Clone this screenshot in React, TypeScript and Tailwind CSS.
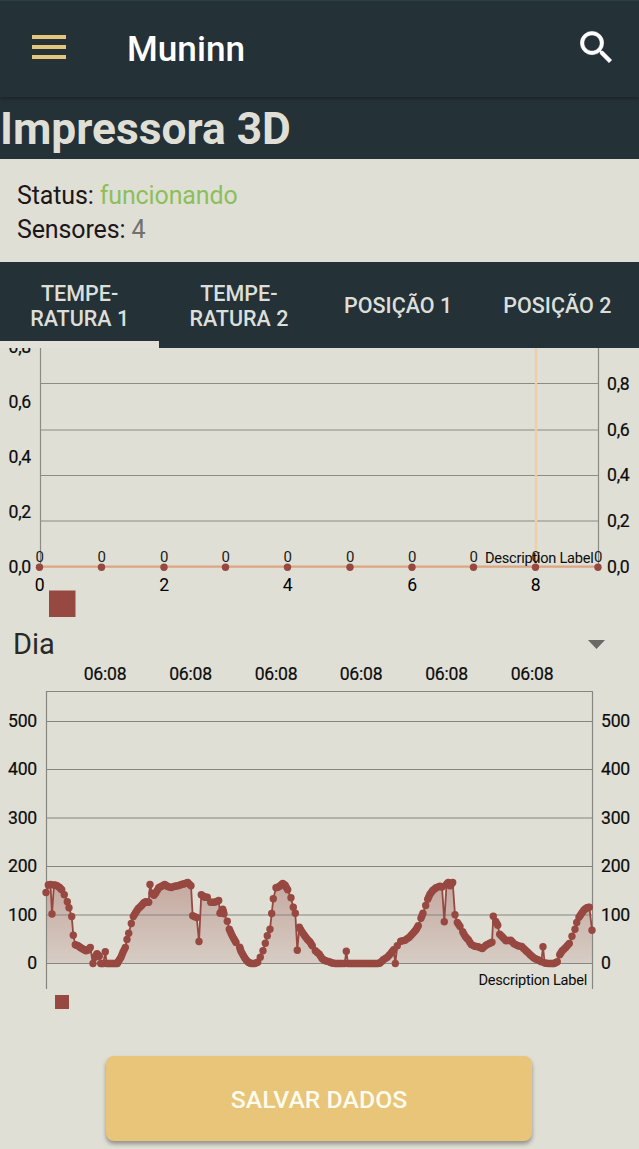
// Sensor detail page - status, tabs and the two temperature charts

import { useState } from "react"

const TABS = ["TEMPE-\nRATURA 1", "TEMPE-\nRATURA 2", "POSIÇÃO 1", "POSIÇÃO 2"]

// [x offset, height] of each reading inside the daily plot
const READINGS = [
  [0, 71], [2.3, 78.5], [4.5, 79], [6, 49.5], [8, 78.5], [10.5, 78], [13.3, 76.3], [15.7, 73.7],
  [18.3, 68.7], [21.3, 61.7], [23, 55.7], [25.7, 47], [27.3, 28.3], [29.3, 18.7], [32, 17.7],
  [34.7, 15.7], [37.3, 14.3], [40, 12.7], [42.3, 13.7], [44.3, 16], [47, 0], [49, 6.3], [51, 9.7],
  [53.3, 7.3], [54.7, 0], [57.3, 0], [59.3, 11.7], [60.7, 0], [63.3, 0], [66, 0], [68.7, 0],
  [71.3, 0], [73, 3], [75, 6.3], [77, 11.3], [79.3, 16], [81, 24], [82.7, 30.3], [85.3, 40],
  [87.3, 47], [89.7, 51], [92.3, 55], [95.3, 57.7], [98, 60.7], [100, 61.7], [102.7, 61.3],
  [104, 79], [106, 70.3], [108, 68.3], [110, 71], [112.7, 75.7], [115.7, 77.3], [118.7, 79],
  [121.7, 77], [125.3, 76], [128.7, 77.3], [132, 77.7], [135.3, 79], [138.3, 79.7], [141.7, 81],
  [145, 77.7], [146.7, 47.7], [150.7, 46], [153, 22], [155.3, 68.7], [158.7, 66.3], [161.3, 66.3],
  [164.7, 61.3], [168.7, 61.3], [172.7, 63], [174, 50.3], [176.7, 54.3], [178, 49.7],
  [181.3, 42.3], [183.3, 34.3], [185.3, 29.7], [187.7, 25], [190, 21], [193.7, 16.3],
  [195, 12.3], [197.3, 8], [200, 3.7], [202.7, 1], [205.3, 0], [208.7, 0], [211.7, 1.3],
  [214.3, 6.3], [217, 12.7], [219.3, 20.3], [221.3, 27.7], [224, 34.3], [225.7, 50],
  [227.3, 64.7], [230, 75.7], [233.3, 77], [236.7, 80], [239.3, 78], [241.7, 73.7],
  [245, 65.7], [247.3, 56.3], [249.3, 50.3], [251.3, 13.3], [253.3, 36.3], [255.7, 32],
  [258.3, 28.3], [261.3, 24.3], [264, 21.5], [266.3, 17.7], [269.3, 12.7], [273.3, 9.3],
  [276, 5], [279.3, 2.7], [283.3, 1.7], [286, 0.5], [289, 0], [292, 0], [295, 0], [298.7, 0],
  [300.3, 12.3], [302, 0], [305, 0], [308, 0], [311, 0], [314, 0], [317, 0], [320, 0],
  [323, 0], [326, 0], [329, 0], [332, 0], [334, 0.5], [337.3, 3.7], [341.3, 6.3], [345, 10.3],
  [347.7, 13.7], [349.3, 0], [351.3, 17.7], [354.7, 22.3], [359, 23.3], [363.3, 26.3],
  [367, 30.3], [370, 33.7], [372.3, 37.7], [375, 45.3], [377, 50.3], [379.7, 58],
  [381.7, 64.3], [384, 69.3], [386.7, 73], [390, 75.7], [394, 77.3], [396, 76.5],
  [398.3, 41.7], [400.5, 79], [402.3, 81], [404, 77.7], [406.7, 81], [409, 48.7],
  [411.3, 41], [414, 37], [416.7, 31.7], [419.3, 27], [422.3, 23.7], [425.3, 19],
  [428.7, 17.3], [432.3, 16.7], [436.3, 15], [440, 18.3], [443.3, 20], [446, 21.3],
  [447.3, 47.3], [449.7, 42], [451.7, 38.3], [453.7, 29.3], [456.7, 26.3], [460, 22.7],
  [464.7, 23.3], [468, 19.7], [472, 17.7], [475.7, 17], [479, 13.7], [482, 11],
  [485.3, 7.7], [488.7, 5], [492, 3.7], [495.3, 1.7], [497, 16.7], [498.7, 0.5], [502, 0],
  [505.3, 0], [508, 0], [511.3, 1.7], [513.7, 8.7], [516.3, 12.7], [519.7, 16], [523.3, 20],
  [526, 27.3], [529, 34.3], [530.7, 41], [533, 46.3], [535.7, 50.3], [538.3, 53.7],
  [541, 55.7], [543.3, 56.3], [546, 33.3],
]

// readings close to each other get one more dot between them
const DOTS = READINGS.flatMap(([x, h], i) => {
  const next = READINGS[i + 1]
  if (!next || Math.hypot(next[0] - x, next[1] - h) > 5.6) return [[x, h]]
  return [[x, h], [(x + next[0]) / 2, (h + next[1]) / 2]]
})

function LiveChart() {
  const points = [39.5, 101.5, 164, 225.5, 287.5, 350, 412, 473.5, 535.5, 598]

  return (
    <svg width="639" height="272" viewBox="0 0 639 272" className="block shrink-0 font-[Roboto,sans-serif] text-[17.6px] tracking-[-0.25px]">
      <g stroke="#8b8c84" strokeWidth="1.2">
        <path d="M40.5 0V219M598.5 0V219" />
        {[35.5, 82, 127.5, 173].map((y) => (
          <path key={y} d={`M40.5 ${y}H598.5`} />
        ))}
      </g>
      <path d="M536 0V219" stroke="#edcfa8" strokeWidth="2.3" />
      <path d="M40 218.7H598" stroke="#dda581" strokeWidth="2.2" />
      {points.map((x, i) => (
        <g key={x}>
          <circle cx={x} cy="219.3" r="3.7" fill="#974840" />
          <text x={x} y="213.5" textAnchor="middle" fontSize="15" fill="#1c1c19">0</text>
          {i % 2 === 0 && (
            <text x={x} y="242.5" textAnchor="middle">{i}</text>
          )}
        </g>
      ))}
      <g fill="#0c0c0b" stroke="#0c0c0b" strokeWidth="0.2">
        {["0,8", "0,6", "0,4", "0,2", "0,0"].map((label, i) => (
          <g key={label}>
            <text x="31" y={5.2 + i * 55} textAnchor="end">{label}</text>
            <text x="607" y={42 + i * 45.7}>{label}</text>
          </g>
        ))}
      </g>
      <text x="593.5" y="215" textAnchor="end" fontSize="14.6" fill="#0c0c0b">Description Label</text>
      <rect x="49" y="242.5" width="26.5" height="26.5" fill="#974840" />
    </svg>
  )
}

function DailyChart() {
  const line = READINGS.map(([x, h]) => `${46 + x},${303.5 - h}`).join(" ")

  return (
    <svg width="639" height="360" viewBox="0 0 639 360" className="block shrink-0 font-[Roboto,sans-serif] text-[17.6px] tracking-[-0.25px]">
      <defs>
        <linearGradient id="fill" x1="0" y1="222" x2="0" y2="304" gradientUnits="userSpaceOnUse">
          <stop offset="0" stopColor="#974840" stopOpacity="0.36" />
          <stop offset="1" stopColor="#974840" stopOpacity="0.12" />
        </linearGradient>
      </defs>
      <polygon points={`46,303.5 ${line} 592,303.5`} fill="url(#fill)" />
      <g stroke="#858680" strokeWidth="1.2" fill="none">
        <path d="M46.5 329V31.5H592.5V329" />
        {[61.5, 109.5, 158, 206.5, 255, 303.5].map((y) => (
          <path key={y} d={`M46.5 ${y}H592.5`} />
        ))}
      </g>
      <polyline points={line} fill="none" stroke="#974840" strokeWidth="1.8" />
      {DOTS.map(([x, h], i) => (
        <circle key={i} cx={46 + x} cy={303.5 - h} r="3.7" fill="#974840" />
      ))}
      <g fill="#0c0c0b" stroke="#0c0c0b" strokeWidth="0.2">
        {[105, 190.5, 276, 361, 446.5, 532].map((x) => (
          <text key={x} x={x} y="19.5" textAnchor="middle">06:08</text>
        ))}
        {[500, 400, 300, 200, 100, 0].map((value, i) => (
          <g key={value}>
            <text x="37" y={66.7 + i * 48.5} textAnchor="end">{value}</text>
            <text x="601" y={66.7 + i * 48.5}>{value}</text>
          </g>
        ))}
      </g>
      <text x="587" y="324.5" textAnchor="end" fontSize="14.6" fill="#0c0c0b">Description Label</text>
      <rect x="55" y="335" width="14" height="14" fill="#974840" />
    </svg>
  )
}

export default function App() {
  const [tab, setTab] = useState(0)

  return (
    <div className="flex h-[1149px] w-[639px] flex-col overflow-hidden bg-[#dfdfd6] font-[Roboto,sans-serif]">
      <header className="relative flex h-[97px] shrink-0 items-center border-t border-[#2c3f46] bg-[#243137] pr-[21px] pl-8 shadow-[0_1px_4px_rgba(0,0,0,0.4)]">
        <button className="flex w-[34px] flex-col gap-[6px] pb-[5px]" aria-label="Menu">
          <span className="h-[4px] w-full bg-[#e3c67b]" />
          <span className="h-[4px] w-full bg-[#e3c67b]" />
          <span className="h-[4px] w-full bg-[#e3c67b]" />
        </button>
        <h1 className="ml-[61px] text-[35.2px] font-medium text-white">Muninn</h1>
        <button className="ml-auto pb-[4px]" aria-label="Buscar">
          <svg width="43" height="43" viewBox="0 0 24 24" fill="#fff" stroke="#fff" strokeWidth="0.3">
            <path d="M15.5 14h-.79l-.28-.27A6.47 6.47 0 0 0 16 9.5 6.5 6.5 0 1 0 9.5 16c1.61 0 3.09-.59 4.23-1.57l.27.28v.79l5 4.99L20.49 19l-4.99-5zm-6 0C7.01 14 5 11.99 5 9.5S7.01 5 9.5 5 14 7.01 14 9.5 11.99 14 9.5 14z" />
          </svg>
        </button>
      </header>

      <h2 className="h-[62px] shrink-0 bg-[#243137] text-[44.3px] leading-[65px] font-bold text-[#dfdfd6]">
        Impressora 3D
      </h2>

      <div className="h-[103px] shrink-0 px-[17px] pt-[20px] text-[25px] leading-[34px] tracking-[-0.13px] text-[#1c1718]">
        <p>
          Status: <span className="text-[#8cbf5a]">funcionando</span>
        </p>
        <p>
          Sensores: <span className="text-[#71716d]">4</span>
        </p>
      </div>

      <nav className="grid h-[86px] shrink-0 grid-cols-4 bg-[#243137] pr-[2px]">
        {TABS.map((label, i) => (
          <button
            key={label}
            onClick={() => setTab(i)}
            className={`border-b-[7px] pt-[8px] text-[21.5px] leading-[25px] font-medium whitespace-pre-line text-[#dcdfd9] ${
              tab === i ? "border-[#e1e0d9]" : "border-transparent"
            }`}
          >
            {label}
          </button>
        ))}
      </nav>

      <LiveChart />

      <div className="flex h-10 shrink-0 items-center justify-between pt-[8px] pr-[34px] pl-[13px]">
        <span className="text-[29px] leading-none text-[#292926]">Dia</span>
        <svg width="17" height="9" viewBox="0 0 17 9" fill="#696a65">
          <path d="M0 0h17L8.5 9z" />
        </svg>
      </div>

      <DailyChart />

      <button className="ml-[106px] mt-[36px] h-[85px] w-[426px] shrink-0 rounded-[8px] bg-[#e8c578] pt-[2px] text-[24.8px] font-medium text-[#fdfbed] shadow-[0_3px_4px_rgba(0,0,0,0.35)]">
        SALVAR DADOS
      </button>
    </div>
  )
}
